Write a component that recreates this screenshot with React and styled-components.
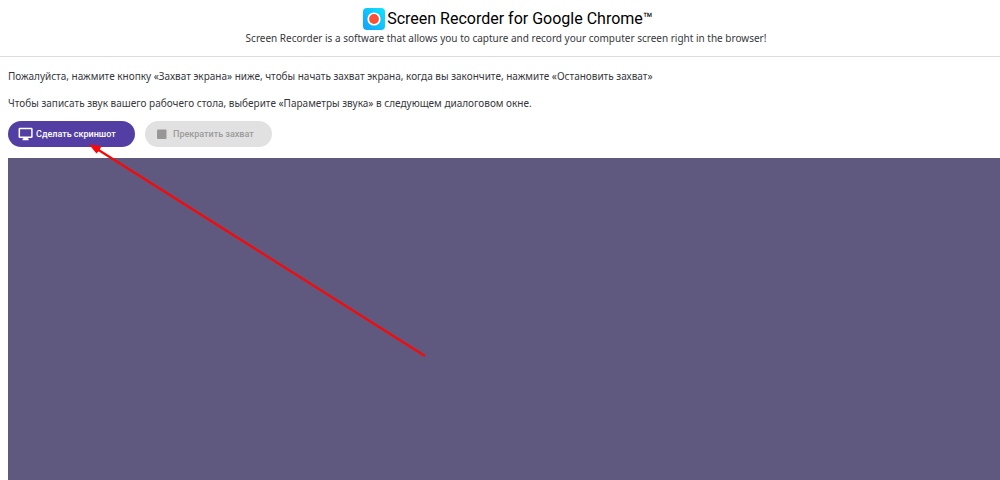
import React from "react";
import styled, { createGlobalStyle } from "styled-components";

const GlobalStyle = createGlobalStyle`
  * { box-sizing: border-box; }
  html, body, #root { height: 100%; }
  body {
    margin: 0;
    background: #fff;
    color: #36383d;
    font-family: "Noto Sans", "Open Sans", sans-serif;
    font-size: 10px;
    line-height: 16px;
  }
`;

const Page = styled.div`
  position: relative;
  display: flex;
  flex-direction: column;
  min-height: 100vh;
  overflow: hidden;
`;

const Header = styled.header`
  display: flex;
  flex-direction: column;
  align-items: center;
  padding: 8px 0 10px 12px;
  border-bottom: 1px solid #dcdcdc;
`;

const Brand = styled.div`
  display: flex;
  align-items: center;
  gap: 2px;
  height: 22px;
  padding-left: 4px;
`;

const Title = styled.h1`
  margin: 0;
  color: #000;
  font: 400 16px/22px Roboto, sans-serif;
  white-space: nowrap;
`;

const Tagline = styled.p`
  margin: 0;
`;

const Main = styled.main`
  display: flex;
  flex: 1;
  flex-direction: column;
  padding: 11px 0 0 8px;
`;

const Hints = styled.div`
  display: flex;
  flex-direction: column;
  gap: 11px;
`;

const Hint = styled.p`
  margin: 0;
`;

const Actions = styled.div`
  display: flex;
  gap: 10px;
  margin: 10px 0 11px;
`;

const PillButton = styled.button`
  display: flex;
  align-items: center;
  gap: ${(p) => (p.$primary ? 3 : 5)}px;
  width: 127px;
  height: 26px;
  padding: 0 0 0 10px;
  border: 0;
  border-radius: 13px;
  background: ${(p) => (p.$primary ? "#533fa3" : "#e1e1e1")};
  color: ${(p) => (p.$primary ? "#fff" : "#9b9b9b")};
  font: 500 9px/16px Roboto, sans-serif;
  white-space: nowrap;
`;

const Preview = styled.section`
  flex: 1;
  background: #60597f;
`;

const Pointer = styled.svg`
  position: absolute;
  top: 144px;
  left: 88px;
  pointer-events: none;
`;

function Logo() {
  return (
    <svg width="22" height="22" viewBox="0 0 22 22" aria-hidden="true">
      <defs>
        <linearGradient id="logoFill" x1="0" y1="1" x2="1" y2="0">
          <stop offset="0" stopColor="#12a0fc" />
          <stop offset="1" stopColor="#10e4fc" />
        </linearGradient>
      </defs>
      <rect width="22" height="22" rx="4" fill="url(#logoFill)" />
      <circle cx="11" cy="11" r="6.6" fill="#fff" />
      <circle cx="11" cy="11" r="4.9" fill="#fa5038" />
    </svg>
  );
}

function MonitorIcon() {
  return (
    <svg width="15" height="14" viewBox="0 0 15 14" aria-hidden="true">
      <rect x="1.3" y="1.4" width="12.6" height="8.9" rx="0.6" fill="none" stroke="#fff" strokeWidth="1.5" />
      <path d="M5.4 10.6h4.4v1h0.8v1.6h-6v-1.6h0.8z" fill="#fff" />
    </svg>
  );
}

function StopIcon() {
  return (
    <svg width="13" height="12" viewBox="0 0 13 12" aria-hidden="true">
      <rect x="2" y="1.5" width="9.5" height="9.5" rx="1" fill="#979797" />
    </svg>
  );
}

export default function App() {
  return (
    <Page>
      <GlobalStyle />
      <Header>
        <Brand>
          <Logo />
          <Title>Screen Recorder for Google Chrome™</Title>
        </Brand>
        <Tagline>
          Screen Recorder is a software that allows you to capture and record your computer screen right in the browser!
        </Tagline>
      </Header>
      <Main>
        <Hints>
          <Hint>
            Пожалуйста, нажмите кнопку «Захват экрана» ниже, чтобы начать захват экрана, когда вы закончите, нажмите «Остановить захват»
          </Hint>
          <Hint>
            Чтобы записать звук вашего рабочего стола, выберите «Параметры звука» в следующем диалоговом окне.
          </Hint>
        </Hints>
        <Actions>
          <PillButton type="button" $primary>
            <MonitorIcon />
            Сделать скриншот
          </PillButton>
          <PillButton type="button" disabled>
            <StopIcon />
            Прекратить захват
          </PillButton>
        </Actions>
        <Preview aria-label="Screen preview" />
      </Main>
      <Pointer width="340" height="214" viewBox="0 0 340 214" aria-hidden="true">
        <path d="M9 5L337 212" stroke="#f80808" strokeWidth="2.2" />
        <path d="M1 0.5L13.5 2L11.5 6.2L8.5 9.5Z" fill="#f80808" />
      </Pointer>
    </Page>
  );
}
